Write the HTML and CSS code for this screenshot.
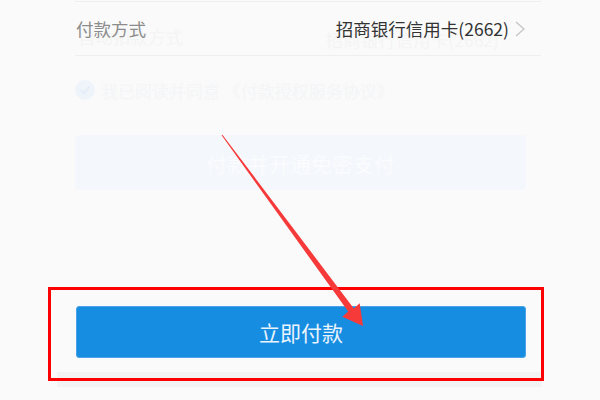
FILE: index.html
```html
<!DOCTYPE html>
<html lang="zh-CN">
<head>
  <meta charset="UTF-8" />
  <meta name="viewport" content="width=device-width, initial-scale=1.0"/>
  <title>立即付款</title>
  <link rel="stylesheet" href="styles.css">
</head>
<body>
  <div class="page">
    <!-- Payment method row -->
    <div class="row pay-method">
      <span class="label">付款方式</span>
      <span class="value">招商银行信用卡(2662)</span>
      <svg class="chevron" width="10" height="16" viewBox="0 0 10 16">
        <polyline points="1,1 9,8 1,15" fill="none" stroke="#c6c6c6" stroke-width="1.4"/>
      </svg>
      <span class="ghost-label">自动扣款方式</span>
      <span class="ghost-value">招商银行信用卡(2662)</span>
    </div>

    <!-- Faded agreement (previous frame) -->
    <div class="agree">
      <svg class="check" width="20" height="20" viewBox="0 0 20 20">
        <circle cx="10" cy="10" r="10" fill="#eff4fb"/>
        <polyline points="5.5,10 9,13.5 14.5,6.5" fill="none" stroke="#e3ecf7" stroke-width="1.6"/>
      </svg>
      <span>我已阅读并同意 《付款授权服务协议》</span>
    </div>

    <div class="ghost-btn">付款并开通免密支付</div>

    <div class="footer">
      <button class="pay-btn">立即付款</button>
    </div>
    <div class="footer-band"></div>
  </div>

  <!-- Annotation -->
  <div class="mark-box"></div>
  <svg class="mark-arrow" width="600" height="400" viewBox="0 0 600 400">
    <polygon fill="#f63a3a" points="222.4,134.7 353.8,308.4 359.7,303.3 363,326 342.3,316.7 348.2,311.6 221.6,135.3"/>
  </svg>
</body>
</html>
```

FILE: styles.css
```css
body {
  margin: 0;
  background-color: #fafafa;
  font-family: "Noto Sans CJK SC", "Noto Sans", sans-serif;
}

.page {
  padding: 1px 0 0 75px;
  width: 466px;
}

.row {
  position: relative;
  display: flex;
  align-items: center;
  height: 53px;
  border-top: 1px solid #efefef;
  border-bottom: 1px solid #efefef;
  padding-right: 16px;
}

.label {
  font-size: 17.5px;
  color: #8c8c8c;
  padding-left: 1px;
}

.value {
  margin-left: auto;
  font-size: 17.5px;
  color: #333;
}

.chevron {
  margin-left: 6px;
}

/* faded text left over from the previous screen */
.ghost-label,
.ghost-value {
  position: absolute;
  top: 22px;
  font-size: 17.5px;
  color: #f4f4f4;
  z-index: -1;
}

.ghost-label {
  left: 3px;
}

.ghost-value {
  right: 42px;
  top: 25px;
}

.agree {
  display: flex;
  align-items: center;
  gap: 6px;
  margin-top: 24px;
  height: 20px;
  font-size: 17px;
  color: #f4f5f7;
}

.ghost-btn {
  margin-top: 35px;
  height: 55px;
  width: 451px;
  background-color: #f4f7fb;
  border-radius: 3px;
  color: #fbfcfe;
  font-size: 21px;
  display: flex;
  align-items: center;
  justify-content: center;
}

.footer {
  margin-top: 116px;
}

.pay-btn {
  display: block;
  width: 450px;
  height: 52px;
  margin-left: 1px;
  border: 1px solid #4aa3e6;
  border-radius: 3px;
  background-color: #178de2;
  color: #eaf4fd;
  font-family: inherit;
  font-size: 21px;
  padding: 0;
}

.footer-band {
  margin: 14px 0 0 -18px;
  width: 485px;
  height: 15px;
  background-color: #f3f3f3;
}

.mark-box {
  position: absolute;
  left: 48px;
  top: 287px;
  width: 496px;
  height: 94px;
  box-sizing: border-box;
  border: 3px solid #ff0000;
}

.mark-arrow {
  position: absolute;
  left: 0;
  top: 0;
  pointer-events: none;
}
```
